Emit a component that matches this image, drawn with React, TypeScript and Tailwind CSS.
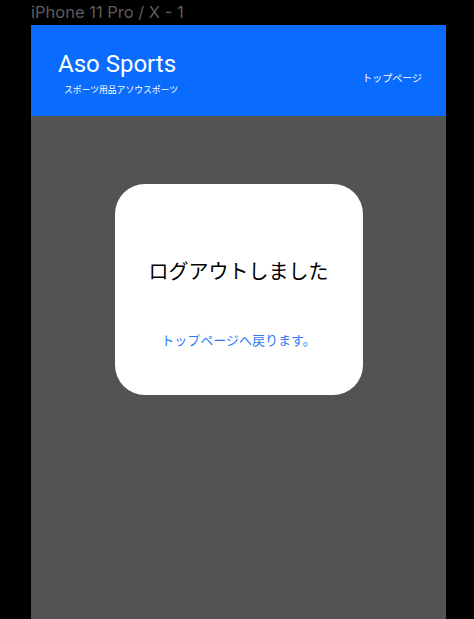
export default function App() {
  const jp = { fontFamily: '"Noto Sans CJK JP", "Noto Sans", sans-serif' };
  return (
    <div className="min-h-[619px] h-[619px] bg-black flex flex-col overflow-hidden">
      <div className="h-[25px] pl-[31px] flex items-center text-[16.5px] leading-none text-[#5c5c5c]" style={{ fontFamily: '"Inter", "Noto Sans", sans-serif' }}>
        iPhone 11 Pro / X - 1
      </div>
      <div className="ml-[31px] w-[415px] flex-1 flex flex-col">
        <div className="h-[91px] bg-[#0a6cff] flex justify-between text-white">
          <div className="pl-[27px] pt-[25px] flex flex-col">
            <div className="text-[24px] leading-[28px]" style={{ fontFamily: 'Roboto, "Noto Sans", sans-serif' }}>Aso Sports</div>
            <div className="pl-[6px] mt-[6px] text-[8.8px] leading-[12px]" style={jp}>スポーツ用品アソウスポーツ</div>
          </div>
          <div className="pr-[24px] pt-[46px] text-[10px] leading-[14px]" style={jp}>トップページ</div>
        </div>
        <div className="flex-1 bg-[#535353] flex flex-col items-center pt-[68px]">
          <div className="w-[248px] h-[211px] bg-white rounded-[30px] flex flex-col items-center" style={jp}>
            <div className="mt-[73px] text-[20px] leading-[28px] text-black">ログアウトしました</div>
            <div className="mt-[46px] text-[13px] leading-[18px] text-[#2f7bf2]">トップページへ戻ります。</div>
          </div>
        </div>
      </div>
    </div>
  );
}
